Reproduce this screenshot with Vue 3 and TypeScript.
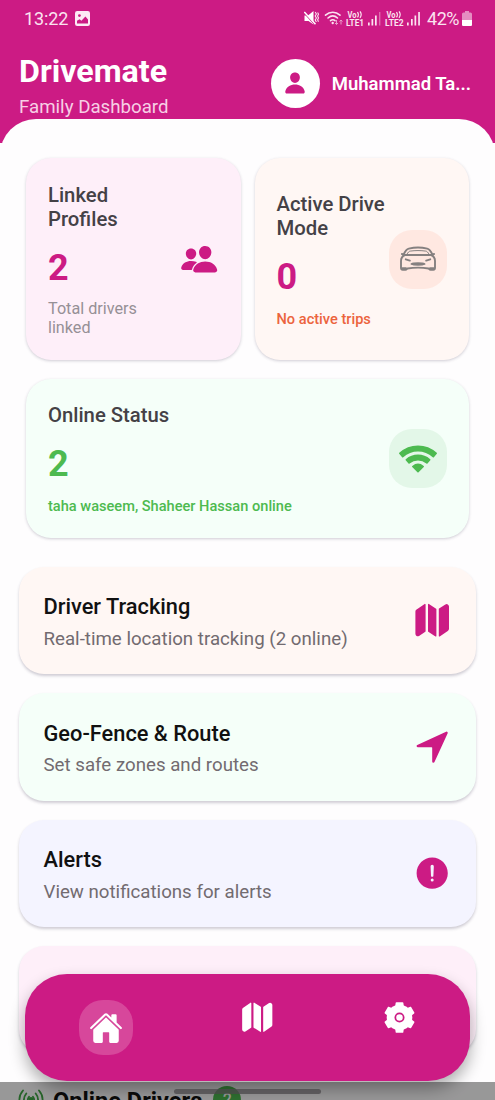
<script setup lang="ts">
type MenuIcon = 'map' | 'navigate' | 'alert'

interface MenuItem {
  title: string
  subtitle: string
  tone: string
  icon: MenuIcon
}

const menu: MenuItem[] = [
  { title: 'Driver Tracking', subtitle: 'Real-time location tracking (2 online)', tone: 'peach', icon: 'map' },
  { title: 'Geo-Fence & Route', subtitle: 'Set safe zones and routes', tone: 'mint', icon: 'navigate' },
  { title: 'Alerts', subtitle: 'View notifications for alerts', tone: 'lavender', icon: 'alert' },
]

const iconPaths: Record<MenuIcon, string> = {
  map: 'M48.17 113.34A32 32 0 0032 141.24V438a32 32 0 0047 28.37c.43-.23.85-.47 1.26-.74l84.14-55.05a8 8 0 003.63-6.72V46.45a8 8 0 00-12.51-6.63zM212.36 39.31A8 8 0 00200 46v357.56a8 8 0 003.63 6.72l96 62.42A8 8 0 00312 466V108.67a8 8 0 00-3.64-6.73zM464.53 46.47a31.64 31.64 0 00-31.5-.88 12.07 12.07 0 00-1.25.74l-84.15 55a8 8 0 00-3.63 6.72v357.46a8 8 0 0012.52 6.63l107.07-73.46a32 32 0 0016.41-28v-296a32.76 32.76 0 00-15.47-28.21z',
  navigate: 'M272 464a16 16 0 01-16-16.42V264.13a8 8 0 00-8-8H64.41a16.31 16.31 0 01-15.49-10.65 16 16 0 018.41-19.87l384-176.15a16 16 0 0121.22 21.19l-176 384A16 16 0 01272 464z',
  alert: 'M256 48C141.31 48 48 141.31 48 256s93.31 208 208 208 208-93.31 208-208S370.69 48 256 48zm0 319.91a20 20 0 1120-20 20 20 0 01-20 20zm21.72-201.15l-5.74 122a16 16 0 01-32 0l-5.74-121.94v-.05a21.74 21.74 0 1143.44 0z',
}
</script>

<template>
  <div class="screen">
    <header class="header">
      <div class="status">
        <span class="clock">13:22</span>
        <svg class="photo" width="15" height="15" viewBox="0 0 15 15">
          <rect width="15" height="15" rx="2.2" fill="#fdeaf5" />
          <circle cx="4.4" cy="4.6" r="1.4" fill="#cc1b84" />
          <path d="M2 12.4V9.8l2.6-1.6 1.8 1.6 4-4.2L13 8.4v4z" fill="#cc1b84" />
        </svg>
        <svg class="signals" width="117" height="18" viewBox="0 0 117 18">
          <path d="M.5 6.500H4L9.500 2v13.500L4.500 12H.5z" fill="#fff" />
          <path d="M.8 4.500L11 15.800" stroke="#cc1b84" stroke-width="1.300" />
          <path d="M.3 3L11.500 15.200" stroke="#fff" stroke-width="1.500" />
          <path d="M11.200 3l1.200 2-1.200 2 1.200 2-1.200 2 1.200 2M13.600 3.500l.9 1.700-.9 1.800.9 1.900-.9 1.800.9 2" fill="none" stroke="#fbe3f0" stroke-width="1.100" />
          <g fill="none" stroke="#fbe3f0" stroke-width="1.600" stroke-linecap="round">
            <path d="M21.500 6.200c4.300-4 10.200-4 14.500 0M24 9c3-2.700 6.500-2.700 9.500 0M26.500 11.700c1.500-1.200 3-1.200 4.500 0" />
          </g>
          <circle cx="28.700" cy="14" r="1.200" fill="#fbe3f0" />
          <path d="M32.500 11v4.500m-1.500-1.500l1.500 1.500 1.500-1.500M37 15.500V11m-1.500 1.500L37 11l1.500 1.500" fill="none" stroke="#ea9ccb" stroke-width="1" />
          <g class="volte">
            <text x="43.500" y="8.600" textLength="9" lengthAdjust="spacingAndGlyphs">Vo</text>
            <text x="42" y="16.800" textLength="18" lengthAdjust="spacingAndGlyphs">LTE1</text>
            <text x="82.500" y="8.600" textLength="9" lengthAdjust="spacingAndGlyphs">Vo</text>
            <text x="81" y="16.800" textLength="18.500" lengthAdjust="spacingAndGlyphs">LTE2</text>
          </g>
          <path d="M53.500 3q1.800 2.700 0 5.400M56 2.400q2.400 3.200 0 6.400M92.500 3q1.800 2.700 0 5.400M95 2.400q2.400 3.200 0 6.400" fill="none" stroke="#fbe3f0" stroke-width="1.200" />
          <g fill="#fbe3f0">
            <rect x="64" y="13.500" width="1.700" height="3" /><rect x="67.500" y="10" width="1.700" height="6.500" /><rect x="71" y="6.500" width="1.700" height="10" />
            <rect x="75" y="3" width="1.400" height="13.500" opacity=".4" />
            <rect x="103" y="13.500" width="1.700" height="3" /><rect x="107" y="10" width="1.700" height="6.500" /><rect x="110.500" y="6.500" width="1.700" height="10" /><rect x="114.200" y="3" width="1.700" height="13.500" />
          </g>
        </svg>
        <span class="percent">42%</span>
        <svg class="battery" width="10" height="15" viewBox="0 0 10 15">
          <path d="M3 0h4v1.500h1.500Q10 1.500 10 3v10.500Q10 15 8.500 15h-7Q0 15 0 13.500V3q0-1.500 1.500-1.500H3z" fill="#e58dc2" />
          <path d="M0 9h10v4.500Q10 15 8.500 15h-7Q0 15 0 13.500z" fill="#fff" />
        </svg>
      </div>
      <div class="brand-row">
        <div>
          <h1>Drivemate</h1>
          <p class="tagline">Family Dashboard</p>
        </div>
        <div class="user">
          <span class="avatar">
            <svg width="24" height="24" viewBox="0 0 512 512">
              <path d="M332.640 64.580C313.180 43.570 286 32 256 32c-30.160 0-57.430 11.500-76.800 32.380-19.580 21.110-29.120 49.800-26.880 80.780C156.760 206.280 203.270 256 256 256s99.160-49.710 103.670-110.820c2.270-30.700-7.330-59.330-27.030-80.600zM432 480H80a31 31 0 01-24.200-11.130c-6.500-7.770-9.120-18.380-7.180-29.110C57.060 392.940 83.400 353.610 124.800 326c36.780-24.510 83.370-38 131.200-38s94.420 13.500 131.200 38c41.400 27.600 67.740 66.930 76.180 113.750 1.940 10.730-.68 21.340-7.180 29.110A31 31 0 01432 480z" />
            </svg>
          </span>
          <span class="name">Muhammad Ta...</span>
        </div>
      </div>
    </header>

    <main class="sheet">
      <section class="stats">
        <article class="stat pink">
          <div class="stat-text narrow">
            <h2>Linked Profiles</h2>
            <strong>2</strong>
            <p class="muted">Total drivers linked</p>
          </div>
          <svg class="people" width="38.400" height="38.400" viewBox="0 0 512 512">
            <path d="M336 256c-20.560 0-40.440-9.180-56-25.840-15.130-16.250-24.370-37.920-26-61-1.740-24.620 5.770-47.260 21.140-63.760S312 80 336 80c23.830 0 45.380 9.060 60.700 25.520 15.470 16.620 23 39.220 21.260 63.630-1.670 23.110-10.900 44.770-26 61C376.440 246.820 356.570 256 336 256zm131.830 176H204.180a27.710 27.710 0 01-22-10.670 30.220 30.220 0 01-5.260-25.790c8.420-33.810 29.280-61.850 60.320-81.080C264.790 297.400 299.860 288 336 288c36.850 0 71 9 98.710 26.050 31.110 19.130 52 47.330 60.380 81.550a30.270 30.270 0 01-5.320 25.780A27.680 27.680 0 01467.830 432zM147 260c-35.190 0-66.130-32.720-69-72.930-1.420-20.600 5-39.650 18-53.620 12.860-13.830 31-21.450 51-21.450s38 7.660 50.930 21.570c13.100 14.080 19.500 33.090 18 53.520-2.870 40.200-33.800 72.910-68.930 72.910zm65.660 31.450c-17.590-8.600-40.420-12.900-65.650-12.900-29.460 0-58.070 7.680-80.570 21.620-25.510 15.830-42.670 38.880-49.600 66.710a27.390 27.390 0 004.790 23.360A25.320 25.320 0 0041.720 400h111a8 8 0 007.870-6.570c.11-.63.25-1.260.41-1.880 8.480-34.060 28.350-62.840 57.710-83.820a8 8 0 00-.63-13.390c-1.570-.92-3.370-1.890-5.420-2.890z" />
          </svg>
        </article>

        <article class="stat peach">
          <div class="stat-text">
            <h2>Active Drive Mode</h2>
            <strong>0</strong>
            <p class="note orange">No active trips</p>
          </div>
          <span class="tile tile-peach">
            <svg width="38" height="26" viewBox="0 0 38 26" fill="none" stroke="#858080" stroke-width="1.900" stroke-linejoin="round" stroke-linecap="round">
              <path d="M4.500 8.700C6.200 4.900 7.500 3.200 9.800 2.600c5.300-1.200 13.100-1.200 18.400 0 2.300.6 3.600 2.300 5.300 6.100" />
              <path d="M7.800 8.500C9.200 6 10 5.300 11.200 5.100c5-.7 10.600-.7 15.600 0 1.200.2 2 .9 3.400 3.400" stroke-width="1" />
              <path d="M6 9h26c3 1.200 4 3.200 4 6v6.800c0 1.400-.6 2-1.700 2h-2.700c-1 0-1.400-.7-2-1.300-5-.8-16.200-.8-21.200 0-.6.6-1 1.300-2 1.300H3.700c-1.100 0-1.700-.6-1.700-2V15c0-2.800 1-4.800 4-6z" />
              <path d="M2.900 8l2 .7M35.100 8l-2 .7M6.800 13.300l4 1.300M31.200 13.300l-4 1.300M3.300 22.300h3.700M31 22.300h3.700" />
              <path d="M12.500 18c2-1 11-1 13 0-2 1-11 1-13 0z" fill="#858080" />
            </svg>
          </span>
        </article>

        <article class="stat mint wide">
          <div class="stat-text">
            <h2>Online Status</h2>
            <strong class="green">2</strong>
            <p class="note green">taha waseem, Shaheer Hassan online</p>
          </div>
          <span class="tile tile-mint">
            <svg width="40" height="30" viewBox="0 0 40 30" fill="#4dba50" stroke="#4dba50" stroke-width="1.600" stroke-linejoin="round">
              <path d="M1.800 9.300c10.400-9.500 26-9.500 36.400 0l-2.900 3.300c-8.800-7.900-21.800-7.900-30.600 0z" />
              <path d="M8.300 15.800c6.800-5.900 16.600-5.900 23.400 0l-2.800 3.200c-5.200-4.500-12.600-4.500-17.800 0z" />
              <path d="M14.800 22.500c3.200-2.600 7.200-2.600 10.400 0L20 27.700z" />
            </svg>
          </span>
        </article>
      </section>

      <section class="menu">
        <article v-for="item in menu" :key="item.title" class="menu-card" :class="item.tone">
          <div>
            <h3>{{ item.title }}</h3>
            <p>{{ item.subtitle }}</p>
          </div>
          <svg width="38.400" height="38.400" viewBox="0 0 512 512"><path :d="iconPaths[item.icon]" /></svg>
        </article>
        <article class="menu-card pink"></article>
      </section>

      <section class="drivers">
        <svg width="26" height="22" viewBox="0 0 26 22" fill="none" stroke="#3fa544" stroke-width="1.800" stroke-linecap="round">
          <path d="M5 1.500C.2 7 .2 14 5 19.500M21 1.500c4.800 5.500 4.800 12.500 0 18M8.300 4.500c-3 3.800-3 8.200 0 12M17.700 4.500c3 3.800 3 8.200 0 12M11 7.800c-1.500 1.800-1.500 3.600 0 5.400M15 7.800c1.500 1.800 1.500 3.600 0 5.400" />
          <circle cx="13" cy="10.500" r="1.500" fill="#3fa544" />
        </svg>
        <h2>Online Drivers</h2>
        <span class="count">2</span>
      </section>
    </main>

    <nav class="tabbar">
      <span class="tab active">
        <svg width="34" height="34" viewBox="0 0 512 512">
          <path d="M261.560 101.280a8 8 0 00-11.060 0L66.400 277.150a8 8 0 00-2.470 5.790L63.900 448a32 32 0 0032 32H192a16 16 0 0016-16V328a8 8 0 018-8h80a8 8 0 018 8v136a16 16 0 0016 16h96.060a32 32 0 0032-32V282.940a8 8 0 00-2.470-5.790z" />
          <path d="M490.910 244.150l-74.800-71.560V64a16 16 0 00-16-16h-48a16 16 0 00-16 16v32l-57.920-55.380C272.770 35.140 264.710 32 256 32c-8.680 0-16.720 3.140-22.140 8.630l-212.700 203.500c-6.220 6-7 15.870-1.340 22.370A16 16 0 0043 267.560L250.500 69.280a8 8 0 0111.060 0l207.520 198.280a16 16 0 0022.590-.44c6.140-6.360 5.630-16.860-.76-22.970z" />
        </svg>
      </span>
      <span class="tab raised shifted">
        <svg width="34.500" height="34.500" viewBox="0 0 512 512"><path :d="iconPaths.map" /></svg>
      </span>
      <span class="tab raised">
        <svg width="35" height="35" viewBox="1.060 1.060 21.880 21.880">
          <path d="M19.140 12.940c.04-.3.06-.61.06-.94 0-.32-.02-.64-.07-.94l2.030-1.580c.18-.14.23-.41.12-.61l-1.920-3.320c-.12-.22-.37-.29-.59-.22l-2.390.96c-.5-.38-1.030-.7-1.620-.94L14.400 2.810c-.04-.24-.24-.41-.48-.41h-3.840c-.24 0-.43.17-.47.41l-.36 2.540c-.59.24-1.130.57-1.620.94l-2.390-.96c-.22-.08-.47 0-.59.22L2.740 8.870c-.12.21-.08.47.12.61l2.030 1.580c-.05.3-.09.63-.09.94s.02.64.07.94l-2.030 1.580c-.18.14-.23.41-.12.61l1.920 3.320c.12.22.37.29.59.22l2.390-.96c.5.38 1.030.7 1.620.94l.36 2.540c.05.24.24.41.48.41h3.840c.24 0 .44-.17.47-.41l.36-2.540c.59-.24 1.130-.56 1.620-.94l2.390.96c.22.08.47 0 .59-.22l1.920-3.320c.12-.22.07-.47-.12-.61z" />
          <circle cx="12" cy="12" r="8" />
          <circle cx="12" cy="12" r="2.600" stroke="#cc1b84" stroke-width="1.100" />
        </svg>
      </span>
    </nav>
    <div class="system-bar"><span></span></div>
  </div>
</template>

<style>
body {
  margin: 0;
}
</style>

<style scoped>
.screen {
  position: relative;
  width: 495px;
  height: 1100px;
  overflow: hidden;
  background: #fefdfe;
  font-family: Roboto, "Liberation Sans", sans-serif;
  color: #111;
}
h1, h2, h3, p {
  margin: 0;
}
svg {
  display: block;
  flex: none;
}
.header {
  height: 143px;
  background: #cc1b84;
  color: #fff;
}
.status {
  display: flex;
  align-items: center;
  height: 36px;
  padding: 0 23px 0 24px;
  color: #fbe3f0;
  font-size: 18px;
}
.clock {
  width: 51px;
  white-space: nowrap;
  letter-spacing: -0.1px;
}
.signals {
  margin-left: auto;
}
.volte {
  fill: #fbe3f0;
  font-size: 8.500px;
  font-weight: 700;
}
.percent {
  margin: 0 3px 0 6px;
  letter-spacing: -0.5px;
}
.brand-row {
  display: flex;
  justify-content: space-between;
  padding: 15px 24px 0 19px;
}
h1 {
  font-size: 32.200px;
  line-height: 40px;
  font-weight: 700;
}
.tagline {
  margin-top: 4px;
  font-size: 18.700px;
  line-height: 24px;
  color: #f7cfe5;
  white-space: nowrap;
}
.user {
  display: flex;
  align-items: center;
  gap: 12px;
  height: 48px;
  margin-top: 8px;
}
.avatar {
  display: grid;
  place-items: center;
  width: 49px;
  height: 49px;
  border-radius: 50%;
  background: #fff;
}
.avatar svg {
  fill: #cc1b84;
}
.name {
  padding-top: 2px;
  font-size: 18.500px;
  font-weight: 600;
  white-space: nowrap;
}
.sheet {
  position: relative;
  margin-top: -24px;
  padding-top: 39px;
  border-radius: 36px 36px 0 0;
  background: #fefdfe;
}
.stats {
  display: grid;
  grid-template-columns: 1fr 1fr;
  grid-template-rows: 202px 159px;
  gap: 19px 14px;
  padding: 0 26px;
}
.stat {
  display: flex;
  align-items: center;
  justify-content: space-between;
  padding: 0 22px;
  border-radius: 25px;
  box-shadow: 0 1px 3px rgba(60, 50, 80, 0.24);
}
.wide {
  grid-column: 1 / 3;
}
.pink {
  background: #feeff9;
}
.peach {
  background: #fff7f4;
}
.mint {
  background: #f5fff9;
}
.lavender {
  background: #f4f4ff;
}
.stat-text {
  padding-top: 3px;
}
.narrow {
  width: 110px;
}
.wide .stat-text {
  padding-top: 1px;
}
.stat h2 {
  font-size: 20.300px;
  line-height: 24px;
  font-weight: 500;
  color: #444146;
}
.stat strong {
  display: block;
  margin: 16px 0 12px;
  font-size: 36px;
  line-height: 42px;
  font-weight: 700;
  color: #cc1b84;
}
.stat .muted {
  margin: -2px 0 1px;
  font-size: 16.200px;
  line-height: 19px;
  color: #969096;
}
.note {
  font-size: 14.600px;
  line-height: 19px;
  font-weight: 500;
  white-space: nowrap;
}
.orange {
  color: #ec643d;
}
.stat .green {
  color: #4dba50;
}
.people {
  fill: #cc1b84;
}
.tile {
  display: grid;
  flex: none;
  place-items: center;
  width: 58px;
  height: 59px;
  border-radius: 23px;
}
.tile-peach {
  background: #ffe8e1;
}
.tile-mint {
  background: #e3f7e8;
}
.menu {
  display: grid;
  grid-auto-rows: 107.300px;
  gap: 19.300px;
  padding: 28.700px 19px 0;
}
.menu-card {
  display: flex;
  align-items: center;
  justify-content: space-between;
  padding: 0 25px 0 24.500px;
  border-radius: 25px;
  box-shadow: 0 2px 3px rgba(60, 50, 80, 0.24);
}
.menu-card svg {
  fill: #cc1b84;
}
.menu-card h3 {
  margin-top: 4px;
  font-size: 21.800px;
  line-height: 28px;
  font-weight: 500;
}
.menu-card p {
  margin-top: 4.500px;
  font-size: 18.700px;
  line-height: 26px;
  color: #726b70;
  white-space: nowrap;
}
.drivers {
  display: flex;
  align-items: center;
  padding: 31px 18px 0;
}
.drivers h2 {
  margin: 2px 11px 0 9px;
  font-size: 23.600px;
  line-height: 28px;
  font-weight: 700;
}
.count {
  display: grid;
  place-items: center;
  width: 28px;
  height: 28px;
  border-radius: 50%;
  background: #4dba50;
  color: #fff;
  font-size: 16px;
  font-weight: 500;
}
.tabbar {
  position: absolute;
  left: 25px;
  top: 973.500px;
  display: flex;
  justify-content: space-between;
  box-sizing: border-box;
  width: 445px;
  height: 107px;
  padding: 26.500px 44px 0 54px;
  border-radius: 42px;
  background: #cc1b84;
  box-shadow: 0 8px 16px rgba(0, 0, 0, 0.32);
}
.tab {
  display: grid;
  place-items: center;
  width: 54px;
  height: 55px;
}
.tab svg {
  fill: #fff;
}
.active {
  border-radius: 24px;
  background: #d7479b;
}
.raised {
  height: 35px;
}
.shifted {
  margin-left: 10px;
}
.system-bar {
  position: absolute;
  left: 0;
  bottom: 0;
  display: flex;
  justify-content: center;
  width: 100%;
  height: 18px;
  background: rgba(0, 0, 0, 0.4);
}
.system-bar span {
  width: 147px;
  height: 5px;
  margin-top: 6.500px;
  border-radius: 3px;
  background: rgba(75, 72, 75, 0.75);
}
</style>
